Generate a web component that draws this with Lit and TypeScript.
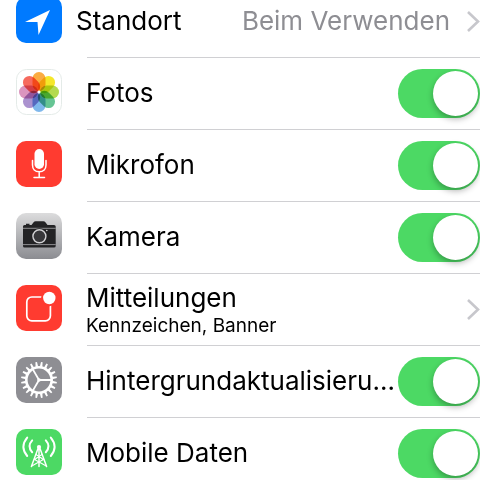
import { LitElement, html, css, svg } from "lit";
import { customElement, property } from "lit/decorators.js";

const petals = ["#fbac42", "#f5e72a", "#b4da50", "#66c594", "#7fb8ec", "#ab92cf", "#db95bf", "#f66a5e"];
const range = (n: number) => Array.from({ length: n }, (_, i) => i);

const icons: Record<string, unknown> = {
  location: svg`
    <rect width="46" height="46" rx="10" fill="#007aff"/>
    <path d="M34 13 L9 25 H21.5 L22.5 38 Z" fill="#fff"/>`,
  photos: svg`
    <rect x="0.5" y="0.5" width="45" height="45" rx="10" fill="#fff" stroke="#e4ebe8"/>
    ${petals.map((c, i) => svg`
      <rect class="petal" x="16.5" y="3" width="13" height="19" rx="6.5" fill=${c}
        transform=${`rotate(${i * 45} 23 23)`}/>`)}
    <circle cx="23" cy="23" r="1.5" fill="#fff"/>`,
  microphone: svg`
    <rect width="46" height="46" rx="10" fill="#ff3b30"/>
    <rect x="18.5" y="8" width="9.5" height="20" rx="4.75" fill="#fff"/>
    <path d="M16.5 19.5 V24 C16.5 28 19 30.8 23.2 30.8 C27.4 30.8 30 28 30 24 V19.5 M23.2 30.8 V36.5 M18 36.6 H28.5"
      fill="none" stroke="#fff" stroke-width="1.5" stroke-linecap="round"/>`,
  camera: svg`
    <defs><linearGradient id="steel" x1="0" y1="0" x2="0" y2="1">
      <stop offset="0" stop-color="#dcdcdd"/><stop offset="1" stop-color="#8b8c91"/>
    </linearGradient></defs>
    <rect width="46" height="46" rx="10" fill="url(#steel)"/>
    <path d="M8.5 12 H10 V10.8 H13.5 V12 H15.5 L18 8.8 Q18.5 8.2 19.5 8.2 H27.5 Q28.5 8.2 29 8.8 L31.5 12 H38 Q39.7 12 39.7 13.6 V33 Q39.7 34.5 38 34.5 H8.5 Q7 34.5 7 33 V13.6 Q7 12 8.5 12 Z" fill="#232325"/>
    <path d="M7 15.3 H39.7 M7 31.6 H39.7" stroke="#a9a9ac" stroke-width="0.8"/>
    <circle cx="23.4" cy="23.3" r="8" fill="#232325"/>
    <circle cx="23.4" cy="23.3" r="6.5" fill="#37373a" stroke="#d2d2d4" stroke-width="1.4"/>
    <circle cx="30.8" cy="17.5" r="0.8" fill="#d2d2d4"/>`,
  notifications: svg`
    <rect width="46" height="46" rx="10" fill="#ff3b30"/>
    <rect x="10.8" y="12" width="23.6" height="23.8" rx="5" fill="none" stroke="#fff" stroke-width="1.7"/>
    <circle cx="33.3" cy="13" r="8.2" fill="#ff3b30"/>
    <circle cx="33.3" cy="13" r="6.2" fill="#fff"/>`,
  gear: svg`
    <rect width="46" height="46" rx="10" fill="#8e8e93"/>
    <circle cx="23" cy="23" r="12.7" fill="none" stroke="#fff" stroke-width="2.6"/>
    ${range(20).map((i) => svg`
      <path d="M21.7 9.8 L22.2 5 H23.8 L24.3 9.8 Z" fill="#fff" transform=${`rotate(${i * 18 + 9} 23 23)`}/>`)}
    <path d="M23 23 H35 M23 23 L17 12.6 M23 23 L17 33.4" stroke="#fff" stroke-width="1.8"/>
    <circle cx="23" cy="23" r="1.8" fill="#fff"/>`,
  antenna: svg`
    <rect width="46" height="46" rx="10" fill="#4cd964"/>
    <g fill="none" stroke="#fff" stroke-linecap="round">
      <path stroke-width="2" d="M16.2 11.4 Q10.8 17.3 16.2 23.2 M29.8 11.4 Q35.2 17.3 29.8 23.2"/>
      <path stroke-width="2" d="M11.2 8.6 Q3.6 17.8 11.2 27 M34.8 8.6 Q42.4 17.8 34.8 27"/>
      <path stroke-width="1.5" d="M22.2 19 L15.4 37.6 M23.8 19 L30.6 37.6 M23 19 V37.6"/>
      <path stroke-width="1.2" d="M20 25.5 L27.4 30.5 L15.8 37 M26 25.5 L18.6 30.5 L30.2 37"/>
    </g>
    <circle cx="23" cy="18" r="2.1" fill="#fff"/>`,
};

interface Setting {
  icon: string;
  title: string;
  detail?: string;
  value?: string;
  toggle?: boolean;
  tight?: boolean;
}

const settings: Setting[] = [
  { icon: "location", title: "Standort", value: "Beim Verwenden", tight: true },
  { icon: "photos", title: "Fotos", toggle: true },
  { icon: "microphone", title: "Mikrofon", toggle: true },
  { icon: "camera", title: "Kamera", toggle: true },
  { icon: "notifications", title: "Mitteilungen", detail: "Kennzeichen, Banner" },
  { icon: "gear", title: "Hintergrundaktualisieru…", toggle: true },
  { icon: "antenna", title: "Mobile Daten", toggle: true },
];

@customElement("setting-row")
export class SettingRow extends LitElement {
  @property({ attribute: false }) setting!: Setting;

  static styles = css`
    :host { display: block; }
    .row {
      display: flex;
      align-items: flex-start;
      gap: 24px;
      box-sizing: border-box;
      width: 100%;
      height: 71px;
      padding: 11px 0 0 16px;
      color: #000;
      font: 400 26px/48px Inter, "Liberation Sans", sans-serif;
      text-align: left;
      text-decoration: none;
    }
    .tight { gap: 14px; }
    .icon { flex: none; display: block; width: 46px; height: 46px; }
    .petal { mix-blend-mode: multiply; }
    .text { flex: 1; min-width: 0; white-space: nowrap; }
    .stacked { display: flex; flex-direction: column; line-height: 26px; }
    .detail { font-size: 19px; line-height: 30px; }
    .value { color: #8e8e93; white-space: nowrap; }
    .chevron { flex: none; display: block; width: 14px; height: 48px; }
    .row .value + .chevron { margin-left: 2px; }
    .toggle {
      appearance: none;
      flex: none;
      box-sizing: border-box;
      width: 82px;
      height: 49px;
      margin: 0 0 0 -24px;
      padding: 2px;
      border-radius: 25px;
      background: #4cd964;
      display: flex;
      justify-content: flex-end;
    }
    .toggle::before {
      content: "";
      width: 45px;
      height: 45px;
      border-radius: 50%;
      background: #fff;
      box-shadow: 0 3px 6px rgba(0, 0, 0, 0.3);
    }
    .toggle:not(:checked) { background: #e5e5ea; justify-content: flex-start; }
    .divider { height: 1px; margin: 0 0 0 87px; border: 0; background: #d0d0d3; }
  `;

  render() {
    const s = this.setting;
    const icon = html`<svg class="icon" viewBox="0 0 46 46" aria-hidden="true">${icons[s.icon]}</svg>`;
    const chevron = html`<svg class="chevron" viewBox="0 0 14 48" aria-hidden="true">
      <path d="M2 15 L12 24.5 L2 34" fill="none" stroke="#c7c7cc" stroke-width="2.6"/></svg>`;
    return html`
      ${s.toggle
        ? html`<label class="row">${icon}<span class="text">${s.title}</span>
            <input class="toggle" type="checkbox" role="switch" checked></label>`
        : html`<a class="row ${s.tight ? "tight" : ""}" href="#">${icon}
            <span class="text ${s.detail ? "stacked" : ""}">
              <span>${s.title}</span>
              ${s.detail ? html`<span class="detail">${s.detail}</span>` : null}
            </span>
            ${s.value ? html`<span class="value">${s.value}</span>` : null}
            ${chevron}</a>`}
      <hr class="divider">`;
  }
}

@customElement("app-root")
export class AppRoot extends LitElement {
  static styles = css`
    :host { display: block; height: 100vh; overflow: hidden; background: #fff; }
    .list { list-style: none; margin: -14px 0 0; padding: 0; }
  `;

  render() {
    return html`<ul class="list">
      ${settings.map((s) => html`<li><setting-row .setting=${s}></setting-row></li>`)}
    </ul>`;
  }
}
